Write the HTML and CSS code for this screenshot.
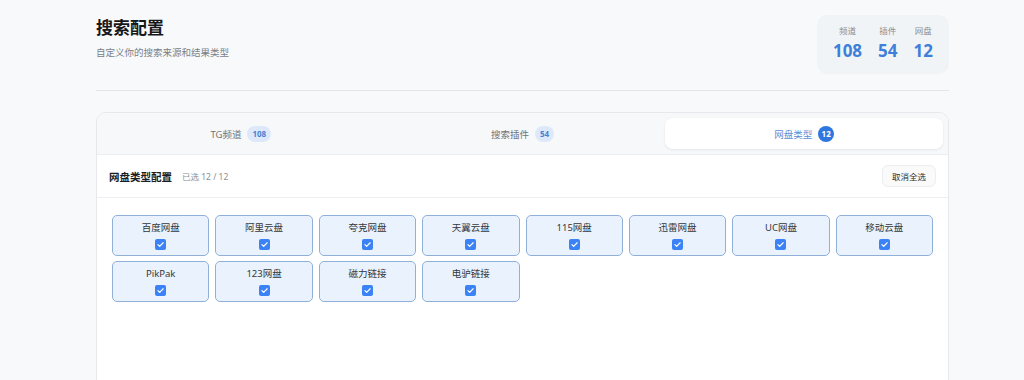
FILE: index.html
```html
<!DOCTYPE html>
<html lang="zh">
<head>
<meta charset="utf-8">
<link rel="stylesheet" href="styles.css">
</head>
<body>
<div class="page">
  <header class="top">
    <div class="titles">
      <h1>搜索配置</h1>
      <p>自定义你的搜索来源和结果类型</p>
    </div>
    <div class="stats">
      <div class="stat"><span class="lbl">频道</span><span class="num">108</span></div>
      <div class="stat"><span class="lbl">插件</span><span class="num">54</span></div>
      <div class="stat"><span class="lbl">网盘</span><span class="num">12</span></div>
    </div>
  </header>
  <div class="rule"></div>
  <section class="card">
    <nav class="tabs">
      <div class="tab">TG频道 <span class="badge">108</span></div>
      <div class="tab">搜索插件 <span class="badge">54</span></div>
      <div class="tab active">网盘类型 <span class="badge">12</span></div>
    </nav>
    <div class="head">
      <div class="head-left"><strong>网盘类型配置</strong><span class="sel">已选 12 / 12</span></div>
      <button class="btn">取消全选</button>
    </div>
    <div class="grid">
      <div class="item"><span>百度网盘</span><i class="cb"></i></div>
      <div class="item"><span>阿里云盘</span><i class="cb"></i></div>
      <div class="item"><span>夸克网盘</span><i class="cb"></i></div>
      <div class="item"><span>天翼云盘</span><i class="cb"></i></div>
      <div class="item"><span>115网盘</span><i class="cb"></i></div>
      <div class="item"><span>迅雷网盘</span><i class="cb"></i></div>
      <div class="item"><span>UC网盘</span><i class="cb"></i></div>
      <div class="item"><span>移动云盘</span><i class="cb"></i></div>
      <div class="item"><span>PikPak</span><i class="cb"></i></div>
      <div class="item"><span>123网盘</span><i class="cb"></i></div>
      <div class="item"><span>磁力链接</span><i class="cb"></i></div>
      <div class="item"><span>电驴链接</span><i class="cb"></i></div>
    </div>
  </section>
</div>
</body>
</html>
```
FILE: styles.css
```css
html, body { margin: 0; padding: 0; }
body {
  background: #f8f9fa;
  font-family: "Noto Sans", "Noto Sans CJK SC", sans-serif;
  color: #1f2328;
  overflow: hidden;
  height: 380px;
}
.page { width: 853px; margin: 0 0 0 96px; }
.top {
  display: flex;
  justify-content: space-between;
  align-items: flex-start;
  padding-top: 15px;
  height: 75px;
  box-sizing: border-box;
}
.titles h1 {
  margin: 0;
  padding-top: 1px;
  font-size: 17px;
  line-height: 24px;
  font-weight: 700;
  color: #15171a;
}
.titles p {
  margin: 6px 0 0;
  font-size: 9.5px;
  color: #7a7f87;
  line-height: 14px;
}
.stats {
  display: flex;
  gap: 16px;
  background: #f1f4f7;
  border-radius: 10px;
  padding: 10px 16px 12px 16px;
  height: 59px;
  box-sizing: border-box;
}
.stat { display: flex; flex-direction: column; align-items: center; }
.lbl { font-size: 8.5px; color: #8a8e94; line-height: 12px; }
.num { font-size: 17px; font-weight: 700; color: #3f7fd9; line-height: 22px; margin-top: 3px; }
.rule { height: 1px; background: #e4e6e9; margin-top: 15px; }
.card {
  margin-top: 21px;
  background: #fff;
  border: 1px solid #e6e8eb;
  border-radius: 10px;
  height: 278px;
  overflow: hidden;
}
.tabs {
  display: flex;
  gap: 4px;
  padding: 5px;
  background: #f7f8f9;
  border-bottom: 1px solid #eceef0;
}
.tab {
  flex: 1;
  height: 31px;
  display: flex;
  align-items: center;
  justify-content: center;
  gap: 6px;
  font-size: 9.5px;
  color: #6e737a;
  border-radius: 8px;
}
.tab.active {
  background: #fff;
  color: #5b8ed6;
  box-shadow: 0 1px 3px rgba(0,0,0,0.08);
}
.badge {
  font-size: 8px;
  font-weight: 700;
  color: #4a80d0;
  background: #dde9fb;
  border-radius: 9px;
  padding: 0 5px;
  height: 16px;
  line-height: 16px;
  min-width: 8px;
  text-align: center;
}
.tab.active .badge { background: #2f76e0; color: #fff; border-radius: 50%; width: 16px; padding: 0; min-width: 0; }
.head {
  display: flex;
  align-items: center;
  justify-content: space-between;
  height: 42px;
  padding: 0 12px;
  border-bottom: 1px solid #eceef0;
}
.head-left { display: flex; align-items: center; gap: 10px; }
.head-left strong { font-size: 10.5px; font-weight: 700; color: #1b1d20; }
.sel { font-size: 8.5px; color: #8a8f96; }
.btn {
  font-family: inherit;
  font-size: 8.5px;
  color: #2a2d31;
  background: #fafafa;
  border: 1px solid #eceef0;
  border-radius: 6px;
  height: 22px;
  padding: 0 9px;
}
.grid {
  display: grid;
  grid-template-columns: repeat(8, 1fr);
  gap: 5px 6px;
  padding: 17px 15px;
}
.item {
  height: 41px;
  box-sizing: border-box;
  border: 1px solid #8fb1d9;
  background: #eaf2fd;
  border-radius: 5px;
  display: flex;
  flex-direction: column;
  align-items: center;
  padding-top: 5px;
  gap: 5px;
}
.item span { font-size: 9.5px; color: #33373c; line-height: 13px; }
.cb {
  width: 11px;
  height: 11px;
  border-radius: 2px;
  background: #3b82f6 url("data:image/svg+xml;utf8,<svg xmlns='http://www.w3.org/2000/svg' viewBox='0 0 12 12'><path d='M3.2 6.2l1.9 1.8 3.8-3.9' fill='none' stroke='white' stroke-width='1.3' stroke-linecap='round' stroke-linejoin='round'/></svg>") center/100% no-repeat;
}
```
